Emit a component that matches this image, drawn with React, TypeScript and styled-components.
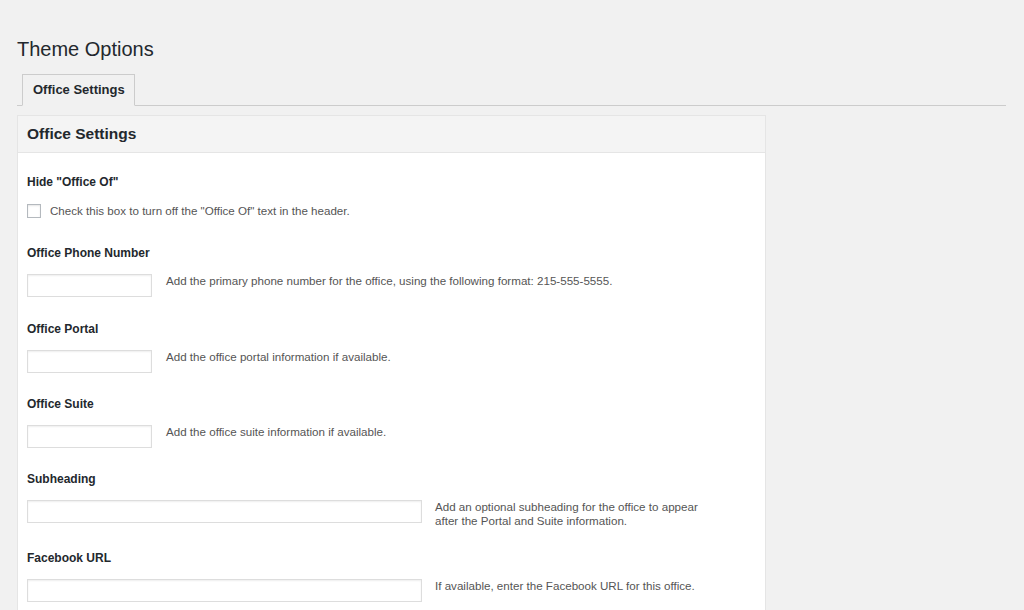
import React from "react";
import styled, { createGlobalStyle } from "styled-components";

const Global = createGlobalStyle`
  html, body { margin: 0; padding: 0; background: #f1f1f1; }
  body { font-family: "Liberation Sans", Arial, sans-serif; color: #23282d; }
  * { box-sizing: border-box; }
`;

const Page = styled.div`
  padding: 37px 18px 0 17px;
  height: 610px;
  overflow: hidden;
`;

const Title = styled.h1`
  margin: 0;
  font-size: 20px;
  font-weight: 400;
  line-height: 25px;
  color: #23282d;
`;

const TabBar = styled.div`
  margin-top: 12px;
  display: flex;
  padding-left: 5px;
  border-bottom: 1px solid #ccc;
  width: 989px;
`;

const Tab = styled.div`
  height: 32px;
  margin-bottom: -1px;
  padding: 0 9px 1px 10px;
  display: flex;
  align-items: center;
  border: 1px solid #ccc;
  border-bottom: 1px solid #f1f1f1;
  background: #f1f1f1;
  font-size: 13px;
  font-weight: 700;
  color: #23282d;
`;

const Panel = styled.div`
  margin-top: 9px;
  width: 749px;
  border: 1px solid #e5e5e5;
  background: #fff;
`;

const PanelHeader = styled.div`
  height: 37px;
  padding: 0 9px;
  display: flex;
  align-items: center;
  background: #f4f4f4;
  border-bottom: 1px solid #e5e5e5;
  font-size: 15.5px;
  font-weight: 700;
  color: #23282d;
`;

const PanelBody = styled.div`
  padding: 20px 9px 20px;
`;

const Field = styled.div<{ $gap: number }>`
  margin-bottom: ${(p) => p.$gap}px;
`;

const Label = styled.div<{ $space: number }>`
  font-size: 12px;
  font-weight: 700;
  line-height: 16px;
  padding-top: 1px;
  color: #23282d;
  margin-bottom: ${(p) => p.$space}px;
`;

const Row = styled.div`
  display: flex;
  align-items: flex-start;
`;

const CheckRow = styled.label`
  display: flex;
  align-items: center;
  gap: 9px;
  height: 14px;
`;

const Check = styled.span`
  width: 14px;
  height: 14px;
  border: 1px solid #b4b9be;
  background: #fff;
  box-shadow: inset 0 1px 2px rgba(0, 0, 0, 0.1);
  flex: none;
`;

const Input = styled.div<{ $w: number }>`
  width: ${(p) => p.$w}px;
  height: 23px;
  border: 1px solid #ddd;
  background: #fff;
  box-shadow: inset 0 1px 2px rgba(0, 0, 0, 0.07);
  flex: none;
`;

const Desc = styled.div<{ $indent?: number; $wide?: boolean }>`
  margin-left: ${(p) => p.$indent ?? 14}px;
  font-size: 11.6px;
  line-height: 14px;
  color: #555;
  max-width: ${(p) => (p.$wide ? "none" : "280px")};
`;

const CheckText = styled.span`
  font-size: 11.6px;
  line-height: 14px;
  color: #555;
`;

type F = { label: string; desc: string; w: number; indent?: number; wide?: boolean; gap: number };

const fields: F[] = [
  { label: "Office Phone Number", desc: "Add the primary phone number for the office, using the following format: 215-555-5555.", w: 125, wide: true, gap: 23 },
  { label: "Office Portal", desc: "Add the office portal information if available.", w: 125, wide: true, gap: 22 },
  { label: "Office Suite", desc: "Add the office suite information if available.", w: 125, wide: true, gap: 22 },
  { label: "Subheading", desc: "Add an optional subheading for the office to appear after the Portal and Suite information.", w: 395, indent: 13, gap: 21 },
  { label: "Facebook URL", desc: "If available, enter the Facebook URL for this office.", w: 395, indent: 13, wide: true, gap: 22 },
];

export default function App() {
  return (
    <>
      <Global />
      <Page>
        <Title>Theme Options</Title>
        <TabBar>
          <Tab>Office Settings</Tab>
        </TabBar>
        <Panel>
          <PanelHeader>Office Settings</PanelHeader>
          <PanelBody>
            <Field $gap={26}>
              <Label $space={14}>Hide "Office Of"</Label>
              <CheckRow>
                <Check />
                <CheckText>Check this box to turn off the "Office Of" text in the header.</CheckText>
              </CheckRow>
            </Field>
            {fields.map((f) => (
              <Field key={f.label} $gap={f.gap}>
                <Label $space={13}>{f.label}</Label>
                <Row>
                  <Input $w={f.w} />
                  <Desc $indent={f.indent} $wide={f.wide}>
                    {f.desc}
                  </Desc>
                </Row>
              </Field>
            ))}
          </PanelBody>
        </Panel>
      </Page>
    </>
  );
}
